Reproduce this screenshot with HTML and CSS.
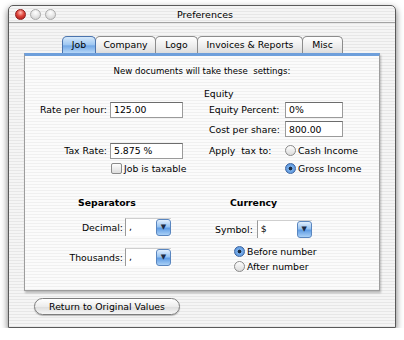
FILE: index.html
```
<!DOCTYPE html>
<html lang="en">
  <head>
    <meta charset="UTF-8" />
    <title>Preferences</title>
    <link rel="stylesheet" href="styles.css">
  </head>
  <body>
    <div class="window">
      <div class="titlebar">
        <div class="lights">
          <span class="light close"></span>
          <span class="light"></span>
          <span class="light"></span>
        </div>
        <div class="title">Preferences</div>
        <div class="lights-spacer"></div>
      </div>

      <div class="tabview">
        <div class="tabs">
          <div class="tab tab-job selected">Job</div>
          <div class="tab tab-company">Company</div>
          <div class="tab tab-logo">Logo</div>
          <div class="tab tab-invoices">Invoices &amp; Reports</div>
          <div class="tab tab-misc">Misc</div>
        </div>
        <div class="panel">
          <p class="intro">New documents will take these&nbsp; settings:</p>

          <div class="job-grid">
            <div class="heading equity">Equity</div>

            <label class="lbl-left row-b">Rate per hour:</label>
            <input class="field field-left row-b" type="text" value="125.00" />
            <label class="lbl-right row-b">Equity Percent:</label>
            <input class="field field-right row-b" type="text" value="0%" />

            <label class="lbl-right row-c">Cost per share:</label>
            <input class="field field-right row-c" type="text" value="800.00" />

            <label class="lbl-left row-d">Tax Rate:</label>
            <input class="field field-left row-d" type="text" value="5.875 %" />
            <label class="lbl-right row-d">Apply&nbsp; tax to:</label>
            <div class="option opt-right row-d"><span class="radio"></span>Cash Income</div>

            <div class="option opt-check row-e"><span class="checkbox"></span>Job is taxable</div>
            <div class="option opt-right row-e"><span class="radio on"></span>Gross Income</div>
          </div>

          <div class="lower">
            <div class="separators">
              <div class="heading bold sep-head">Separators</div>
              <div class="sep-grid">
                <label class="sep-lbl">Decimal:</label>
                <div class="popup"><span class="popup-val">,</span><span class="popup-btn">&#9660;</span></div>
                <label class="sep-lbl">Thousands:</label>
                <div class="popup"><span class="popup-val">,</span><span class="popup-btn">&#9660;</span></div>
              </div>
            </div>
            <div class="currency">
              <div class="heading bold cur-head">Currency</div>
              <div class="symbol-row">
                <label>Symbol:</label>
                <div class="popup popup-wide"><span class="popup-val">$</span><span class="popup-btn">&#9660;</span></div>
              </div>
              <div class="option cur-opt"><span class="radio on"></span>Before number</div>
              <div class="option cur-opt"><span class="radio"></span>After number</div>
            </div>
          </div>
        </div>
        <button class="pill">Return to Original Values</button>
      </div>
    </div>
  </body>
</html>
```

FILE: styles.css
```
body {
  margin: 0;
  padding: 5px 0 0 8px;
  background: #fff;
  font-family: "DejaVu Sans", sans-serif;
  font-size: 9.3px;
  color: #000;
}

.window {
  box-sizing: border-box;
  width: 388px;
  height: 323px;
  border: 1px solid #5a5a5a;
  border-radius: 5px 5px 0 0;
  background: repeating-linear-gradient(#f5f5f5 0 2px, #e7e7e7 2px 3px);
  box-shadow: 0 3px 7px rgba(0, 0, 0, 0.55);
}

/* title bar */
.titlebar {
  display: flex;
  align-items: center;
  height: 16px;
  border-bottom: 1px solid #a3a3a3;
}
.lights,
.lights-spacer {
  width: 56px;
}
.lights {
  display: flex;
  gap: 4px;
  padding-left: 6px;
}
.light {
  width: 11px;
  height: 11px;
  box-sizing: border-box;
  border-radius: 50%;
  border: 1px solid #a9a9a9;
  background: radial-gradient(circle at 50% 30%, #ffffff 0, #e9e9e9 45%, #c9c9c9 100%);
}
.light.close {
  border-color: #8e1d1d;
  background: radial-gradient(circle at 50% 30%, #ffc0b8 0, #e0463c 45%, #9c1212 100%);
}
.title {
  flex: 1;
  text-align: center;
  font-size: 9.5px;
}

/* tab view */
.tabview {
  margin: 13px 15px 0 15px;
}
.tabs {
  display: flex;
  margin-left: 38px;
  height: 17px;
}
.tab {
  box-sizing: border-box;
  height: 17px;
  line-height: 16px;
  text-align: center;
  border: 1px solid #8c8c8c;
  border-bottom: none;
  border-radius: 5px 5px 0 0;
  margin-right: -1px;
  background: linear-gradient(#ffffff, #ececec 60%, #dcdcdc);
}
.tab.selected {
  border-color: #4b74ad;
  background: linear-gradient(#d6e9fb, #9cc6f1 50%, #72a8e6 55%, #b5d6f7);
  position: relative;
  z-index: 1;
}
.tab-job { width: 34px; }
.tab-company { width: 61px; }
.tab-logo { width: 43px; }
.tab-invoices { width: 106px; }
.tab-misc { width: 41px; }

.panel {
  box-sizing: border-box;
  height: 238px;
  border: 1px solid #9d9d9d;
  border-top: 3px solid #6e9fdb;
  background: repeating-linear-gradient(#fbfbfb 0 2px, #f0f0f0 2px 3px);
  box-shadow: 1px 2px 2px rgba(0, 0, 0, 0.25);
}
.intro {
  margin: 0;
  padding-top: 9px;
  line-height: 12px;
  text-align: center;
  font-size: 8.6px;
}

/* upper job settings */
.job-grid {
  display: grid;
  margin-top: 10px;
  grid-template-columns: 85px 73px 26px 76px 1fr;
  grid-template-rows: 14px 17px 22px 21px 14px;
  align-items: center;
}
.heading {
  line-height: 12px;
}
.bold {
  font-weight: bold;
}
.equity {
  grid-column: 4;
  grid-row: 1;
  margin-left: -5px;
}
.row-b { grid-row: 2; }
.row-c { grid-row: 3; }
.row-d { grid-row: 4; }
.row-e { grid-row: 5; }
.lbl-left {
  grid-column: 1;
  text-align: right;
  padding-right: 3px;
}
.field-left { grid-column: 2; }
.lbl-right { grid-column: 4; }
.field-right {
  grid-column: 5;
  width: 58px;
}
.opt-right { grid-column: 5; }
.opt-check { grid-column: 2 / span 2; }

.field {
  box-sizing: border-box;
  height: 16px;
  padding: 0 3px;
  border: 1px solid #9a9a9a;
  border-top-color: #6c6c6c;
  background: #fff;
  font: inherit;
  font-size: 9.3px;
  color: #000;
  outline: none;
}

.option {
  display: flex;
  align-items: center;
  gap: 2px;
  white-space: nowrap;
}
.radio,
.checkbox {
  flex: none;
  box-sizing: border-box;
  width: 11px;
  height: 11px;
  border: 1px solid #8a8a8a;
  background: linear-gradient(#fdfdfd, #dcdcdc);
}
.radio {
  border-radius: 50%;
}
.checkbox {
  border-radius: 2px;
  margin-left: 1px;
}
.radio.on {
  border-color: #3d65a0;
  background: radial-gradient(circle, #1a2a40 0 1.6px, #79aee9 2.2px, #4d8ad8 100%);
}

/* lower section */
.lower {
  display: flex;
  margin-top: 22px;
}
.separators {
  width: 175px;
}
.sep-head {
  margin-left: 53px;
}
.sep-grid {
  display: grid;
  grid-template-columns: 98px 46px;
  grid-template-rows: 18px 18px;
  row-gap: 12px;
  column-gap: 2px;
  align-items: center;
  margin-top: 9px;
}
.sep-lbl {
  text-align: right;
}
.popup {
  display: flex;
  box-sizing: border-box;
  width: 46px;
  height: 18px;
  background: #fff;
  border-left: 1px solid #9a9a9a;
  border-top: 1px solid #cfcfcf;
}
.popup-wide {
  width: 55px;
}
.popup-val {
  flex: 1;
  padding-left: 3px;
  line-height: 16px;
}
.popup-btn {
  box-sizing: border-box;
  width: 15px;
  height: 17px;
  border: 1px solid #5a86bf;
  border-radius: 3px;
  background: linear-gradient(#e1effd, #97c3f1 45%, #5f9ce4 55%, #a9d0f6);
  color: #1b2a44;
  font-size: 7px;
  line-height: 14px;
  text-align: center;
}
.currency {
  flex: 1;
}
.cur-head {
  margin-left: 30px;
}
.symbol-row {
  display: flex;
  align-items: center;
  gap: 4px;
  margin: 11px 0 0 15px;
}
.cur-opt {
  margin: 8px 0 0 34px;
}
.cur-opt + .cur-opt {
  margin-top: 4px;
}

/* button */
.pill {
  display: block;
  box-sizing: border-box;
  width: 146px;
  height: 17px;
  margin: 7px 0 0 10px;
  padding: 0;
  border: 1px solid #7d7d7d;
  border-radius: 9px;
  background: linear-gradient(#ffffff, #ececec 50%, #dedede 55%, #f6f6f6);
  box-shadow: 0 1px 1px rgba(0, 0, 0, 0.25);
  font: inherit;
  font-size: 9.3px;
  color: #000;
}
```
